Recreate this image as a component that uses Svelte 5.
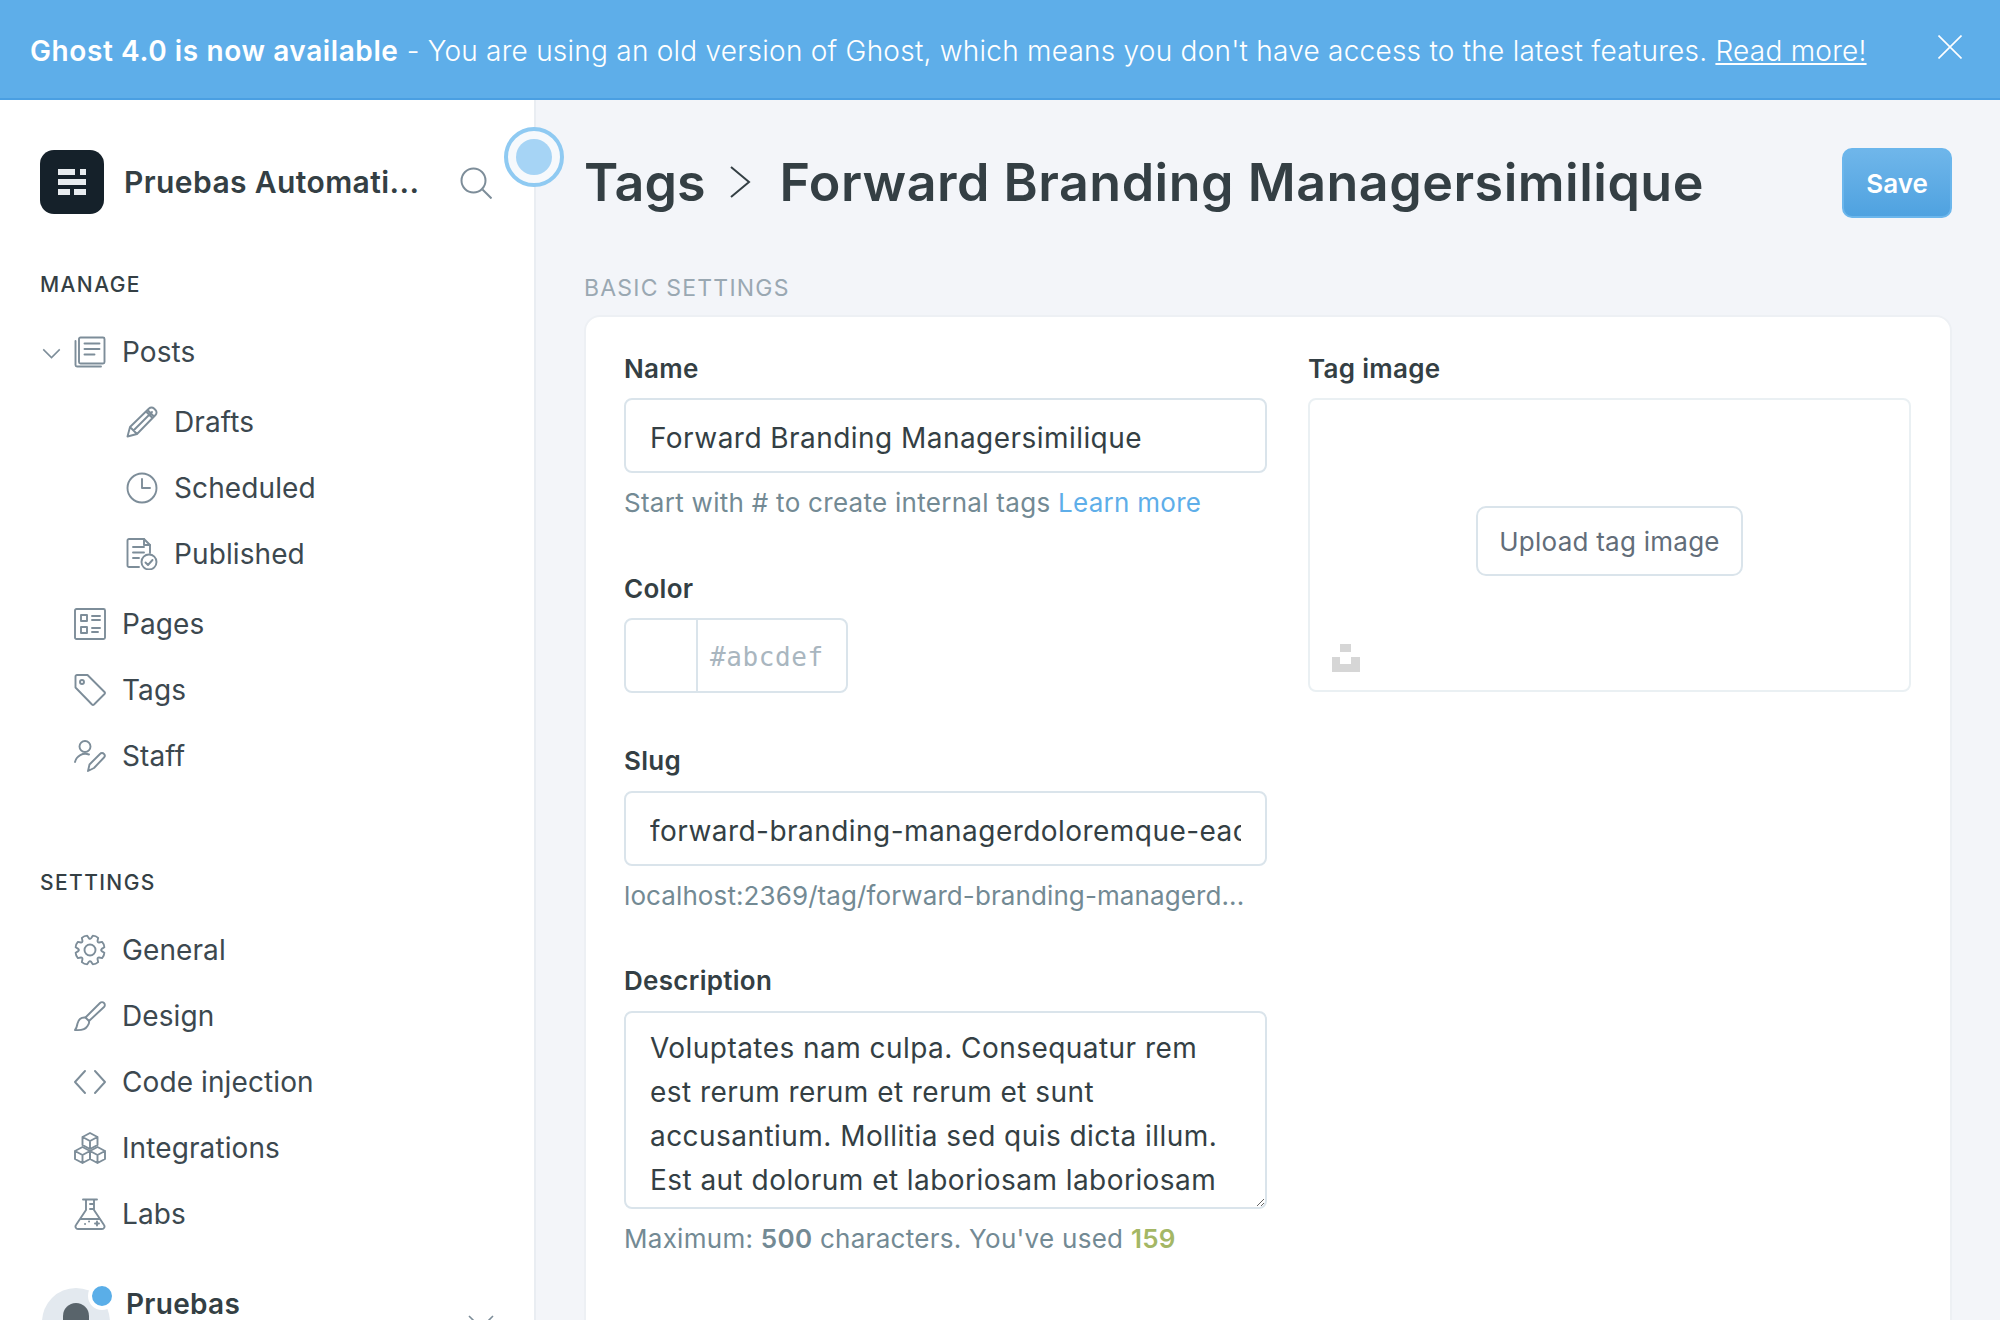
<script>
	const manage = [
		{ label: 'Posts', icon: 'posts', caret: true },
		{ label: 'Drafts', icon: 'drafts', sub: true },
		{ label: 'Scheduled', icon: 'clock', sub: true },
		{ label: 'Published', icon: 'published', sub: true },
		{ label: 'Pages', icon: 'pages', gap: true },
		{ label: 'Tags', icon: 'tag' },
		{ label: 'Staff', icon: 'staff' }
	];
	const settings = [
		{ label: 'General', icon: 'gear' },
		{ label: 'Design', icon: 'brush' },
		{ label: 'Code injection', icon: 'code' },
		{ label: 'Integrations', icon: 'cubes' },
		{ label: 'Labs', icon: 'flask' }
	];
	const description =
		'Voluptates nam culpa. Consequatur rem est rerum rerum et rerum et sunt accusantium. Mollitia sed quis dicta illum. Est aut dolorum et laboriosam laboriosam';

	// eight rounded teeth round the centre of the 32 box
	function gearPath() {
		const pt = (r, a) => `${(16 + r * Math.cos(a)).toFixed(2)} ${(16 + r * Math.sin(a)).toFixed(2)}`;
		let d = '';
		for (let i = 0; i < 8; i++) {
			const a = (i * Math.PI) / 4 - Math.PI / 8;
			d += `${i ? 'Q' : 'M'}${i ? pt(10.5, a - 0.39) + ' ' : ''}${pt(11.8, a - 0.3)}`;
			d += `L${pt(14.6, a - 0.2)}Q${pt(15.4, a)} ${pt(14.6, a + 0.2)}L${pt(11.8, a + 0.3)}`;
		}
		return d + `Q${pt(10.5, -Math.PI / 8 - 0.39)} ${pt(11.8, -Math.PI / 8 - 0.3)}Z`;
	}
	const gear = gearPath();
</script>

{#snippet icon(name)}
	<svg class="icon" viewBox="0 0 32 32" fill="none" stroke="currentColor" stroke-width="1.9" stroke-linecap="round" stroke-linejoin="round">
		{#if name === 'posts'}
			<rect x="5" y="1.500" width="25.500" height="26" rx="1.500" />
			<path d="M1.500 5v24a1.500 1.500 0 0 0 1.500 1.500h24M10.500 7.500h15M10.500 13h15M10.500 18.500h10" />
		{:else if name === 'drafts'}
			<path d="M1.500 30.500L4 21 23 2.500a3.500 3.500 0 0 1 5 0l1.500 1.500a3.500 3.500 0 0 1 0 5L11 28zM4 21l7 7M7.500 24.500L26 6M20 5.500l6.500 6.500M21.500 4l6.500 6.500" />
		{:else if name === 'clock'}
			<circle cx="16" cy="16" r="14.500" />
			<path d="M16 7v9h8" />
		{:else if name === 'published'}
			<path d="M13 29H3a1.500 1.500 0 0 1-1.500-1.500v-25A1.500 1.500 0 0 1 3 1h15l6 6v8M7 9h11M7 14.500h11M7 20h6" />
			<path d="M18 1v6h6" />
			<circle cx="23" cy="24" r="7.500" />
			<path d="M19.500 24.500l2.500 2.500 4.500-5" />
		{:else if name === 'pages'}
			<rect x="1" y="1" width="30" height="30" rx="1.500" />
			<rect x="7" y="7" width="6" height="6" />
			<rect x="7" y="19" width="6" height="6" />
			<path d="M18 8h8M18 12h8M18 20h8M18 24h6" />
		{:else if name === 'tag'}
			<path d="M1.500 2.500A1.500 1.500 0 0 1 3 1h10.500l17 17a1.500 1.500 0 0 1 0 2L20 30.500a1.500 1.500 0 0 1-2 0L1.500 13.500z" />
			<circle cx="8" cy="8" r="2" />
		{:else if name === 'staff'}
			<circle cx="11" cy="6.500" r="5.500" />
			<path d="M1 22a10.500 10.500 0 0 1 14-7.500" />
			<path d="M14 31l1.500-6.500L26 14a2.500 2.500 0 0 1 4 0 2.500 2.500 0 0 1 0 3.500L20 28z" />
		{:else if name === 'gear'}
			<path d={gear} />
			<circle cx="16" cy="16" r="5.500" />
		{:else if name === 'brush'}
			<path d="M15 21l-3.500-3.500L26 3a2.800 2.800 0 0 1 4 0 2.800 2.800 0 0 1 0 4z" />
			<path d="M11.500 17.500c-4.500-.5-7 2-8 6-.5 2.500-1 5-2.500 6.500 5.500.5 10.500-.5 12.500-4 1.500-2 2-3.500 1.500-5" />
		{:else if name === 'code'}
			<path d="M11 5L1 16l10 11M21 5l10 11-10 11" />
		{:else if name === 'cubes'}
			<path d="M16 1l7.500 4v8L16 17l-7.500-4V5zM8.500 5l7.500 4 7.500-4M16 9v8" />
			<path d="M8.500 15L16 19v8l-7.500 4L1 27v-8zM1 19l7.500 4 7.500-4M8.500 23v8" />
			<path d="M23.500 15L31 19v8l-7.500 4L16 27v-8zM16 19l7.500 4 7.500-4M23.500 23v8" />
		{:else if name === 'flask'}
			<path d="M9 1.500h14M12 1.500V12L2 27a2.500 2.500 0 0 0 2 4h24a2.500 2.500 0 0 0 2-4L20 12V1.500M16 6h4M16 11h4M6 21h20M11 26h.1M15 23.500h.1M21 25.500h4M23 23.500v4" />
		{/if}
	</svg>
{/snippet}

{#snippet navRow(item)}
	<div class="nav-row" class:sub={item.sub} class:gap={item.gap} class:open={item.caret}>
		{#if item.caret}
			<svg class="caret" viewBox="0 0 20 12" fill="none" stroke="currentColor" stroke-width="1.6"><path d="M1 1.500l9 9 9-9" /></svg>
		{/if}
		{@render icon(item.icon)}
		<span>{item.label}</span>
	</div>
{/snippet}

<div class="page">
	<div class="banner">
		<p><strong>Ghost 4.0 is now available</strong> - You are using an old version of Ghost, which means you don't have access to the latest features. <a href="#top">Read more!</a></p>
		<svg class="close" viewBox="0 0 24 24" fill="none" stroke="#fff" stroke-width="1.6"><path d="M0.500 0.500l23 23M23.500 0.500l-23 23" /></svg>
	</div>

	<div class="layout">
		<aside class="sidebar">
			<div class="brand">
				<div class="logo">
					<i style="width:17px"></i><i style="width:6px"></i>
					<i style="width:28px"></i>
					<i style="width:12px"></i><i style="width:12px"></i>
				</div>
				<span class="site">Pruebas Automati...</span>
				<svg class="search" viewBox="0 0 32 32" fill="none" stroke="currentColor" stroke-width="2"><circle cx="13.500" cy="13.500" r="12" /><path d="M22.500 22.500l9 9" /></svg>
			</div>

			<h4>MANAGE</h4>
			{#each manage as item}
				{@render navRow(item)}
			{/each}

			<h4 class="second">SETTINGS</h4>
			{#each settings as item}
				{@render navRow(item)}
			{/each}

			<div class="user">
				<div class="avatar"><i></i><b></b></div>
				<span>Pruebas</span>
				<svg class="user-caret" viewBox="0 0 26 14" fill="none" stroke="currentColor" stroke-width="1.6"><path d="M1 1l12 12L25 1" /></svg>
			</div>

			<div class="pulse"><i></i></div>
		</aside>

		<main class="content">
			<header class="head">
				<h1>
					<span class="root">Tags</span>
					<svg class="crumb" viewBox="0 0 22 34" fill="none" stroke="currentColor" stroke-width="2"><path d="M2 2l18 15L2 32" /></svg>
					<span>Forward Branding Managersimilique</span>
				</h1>
				<button class="save">Save</button>
			</header>

			<div class="section">BASIC SETTINGS</div>

			<section class="card">
				<div class="col">
					<label for="name">Name</label>
					<input id="name" value="Forward Branding Managersimilique" />
					<p class="help">Start with # to create internal tags <a href="#top">Learn more</a></p>

					<label for="color" class="next">Color</label>
					<div class="color">
						<div class="swatch"></div>
						<span id="color">#abcdef</span>
					</div>

					<label for="slug" class="next slug-label">Slug</label>
					<input id="slug" value="forward-branding-managerdoloremque-eaque" />
					<p class="help url">localhost:2369/tag/forward-branding-managerd...</p>

					<label for="desc" class="next desc-label">Description</label>
					<textarea id="desc" value={description}></textarea>
					<p class="help">Maximum: <b>500</b> characters. You've used <b class="used">159</b></p>
				</div>

				<div class="col side">
					<span class="label">Tag image</span>
					<div class="upload">
						<button>Upload tag image</button>
						<svg class="unsplash" viewBox="0 0 28 28" fill="#d6d6d6"><path d="M8 0h11v8H8zM0 13h8v7h11v-7h9v15H0z" /></svg>
					</div>
				</div>
			</section>
		</main>
	</div>
</div>

<style>
	:global(body) {
		margin: 0;
		background: #f3f5f9;
	}

	.page {
		height: 1320px;
		overflow: hidden;
		display: flex;
		flex-direction: column;
		font-family: Inter, 'Noto Sans', sans-serif;
		color: #3c484f;
	}

	.banner {
		height: 98px;
		flex: none;
		display: flex;
		align-items: center;
		justify-content: space-between;
		padding: 0 38px 0 30px;
		background: #5eaee9;
		border-bottom: 2px solid #4a9fe2;
		color: #fff;
		font-size: 28px;
		letter-spacing: 0.24px;
	}

	.banner p {
		margin: 4px 0 0;
		font-weight: 300;
	}

	.banner strong {
		font-weight: 600;
		letter-spacing: 0.6px;
	}

	.banner a {
		color: #fff;
	}

	.close {
		width: 24px;
		height: 24px;
		margin-bottom: 4px;
	}

	.layout {
		flex: 1;
		display: flex;
		min-height: 0;
	}

	.sidebar {
		position: relative;
		width: 536px;
		flex: none;
		box-sizing: border-box;
		padding: 50px 40px 0;
		background: #fff;
		border-right: 2px solid #e9edf2;
	}

	.brand {
		display: flex;
		align-items: center;
		height: 64px;
		margin-bottom: 59px;
	}

	.logo {
		width: 64px;
		height: 64px;
		box-sizing: border-box;
		padding: 19px 18px;
		flex: none;
		display: flex;
		flex-wrap: wrap;
		justify-content: space-between;
		align-content: space-between;
		background: #15212a;
		border-radius: 14px;
	}

	.logo i {
		display: block;
		height: 6px;
		background: #e8ecef;
	}

	.site {
		margin-left: 20px;
		font-size: 30px;
		font-weight: 600;
		letter-spacing: 0.4px;
		color: #343f44;
		white-space: nowrap;
	}

	.search {
		width: 32px;
		height: 32px;
		margin-left: auto;
		margin-right: 2px;
		margin-top: 2px;
		color: #7d8d99;
	}

	h4 {
		margin: 0 0 22px;
		font-size: 21px;
		line-height: 24px;
		font-weight: 500;
		letter-spacing: 1.4px;
		color: #343f44;
	}

	h4.second {
		margin-top: 82px;
	}

	.nav-row {
		position: relative;
		display: flex;
		align-items: center;
		height: 66px;
		padding-left: 34px;
		font-size: 28px;
		letter-spacing: 0.1px;
		font-weight: 400;
		color: #3c484f;
	}

	.nav-row.sub {
		padding-left: 86px;
	}

	.nav-row.gap {
		margin-top: 4px;
	}

	.nav-row.open {
		margin-bottom: 4px;
	}

	.icon {
		width: 32px;
		height: 32px;
		flex: none;
		margin-right: 16px;
		color: #7d8d99;
	}

	.caret {
		position: absolute;
		left: 2px;
		top: 29px;
		width: 19px;
		height: 11px;
		color: #7d8d99;
	}

	.user {
		position: relative;
		display: flex;
		align-items: flex-start;
		margin-top: 41px;
		font-size: 28px;
		line-height: 30px;
		font-weight: 600;
		letter-spacing: 0.3px;
		color: #343f44;
	}

	.user span {
		margin-left: 16px;
		margin-top: 1px;
	}

	.avatar {
		position: relative;
		width: 68px;
		height: 68px;
		margin-left: 2px;
		border-radius: 50%;
		background: #e3e9ef;
	}

	.avatar i {
		position: absolute;
		left: 21px;
		top: 15px;
		width: 26px;
		height: 32px;
		border-radius: 13px;
		background: #59646b;
	}

	.avatar b {
		position: absolute;
		left: 46px;
		top: -6px;
		width: 20px;
		height: 20px;
		border: 4px solid #fff;
		border-radius: 50%;
		background: #5aaee8;
	}

	.user-caret {
		position: absolute;
		left: 428px;
		top: 27px;
		width: 26px;
		height: 14px;
		color: #7d8d99;
	}

	.pulse {
		position: absolute;
		right: -30px;
		top: 27px;
		width: 60px;
		height: 60px;
		box-sizing: border-box;
		display: flex;
		align-items: center;
		justify-content: center;
		border: 4px solid #8fcaf2;
		border-radius: 50%;
		background: #f6f9fc;
		z-index: 2;
	}

	.pulse i {
		display: block;
		width: 36px;
		height: 36px;
		border-radius: 50%;
		background: #a6d4f5;
	}

	.content {
		flex: 1;
		min-width: 0;
		padding: 48px 48px 0 48px;
	}

	.head {
		display: flex;
		align-items: center;
		justify-content: space-between;
		height: 70px;
	}

	h1 {
		display: flex;
		align-items: center;
		margin: 0 0 2px;
		font-size: 52px;
		font-weight: 600;
		letter-spacing: 0.5px;
		color: #343f44;
	}

	h1 .root {
		letter-spacing: 0;
	}

	.crumb {
		width: 22px;
		height: 34px;
		margin: 0 28px 0 24px;
		color: #343f44;
	}

	.save {
		width: 110px;
		height: 70px;
		border: 2px solid #6bb6ec;
		border-radius: 10px;
		background: linear-gradient(#6fb6ea, #4fa2e0);
		color: #fff;
		font: 600 26px Inter, sans-serif;
	}

	.section {
		margin-top: 56px;
		margin-bottom: 13px;
		font-size: 23px;
		line-height: 28px;
		letter-spacing: 1.2px;
		color: #9aa8b2;
	}

	.card {
		display: flex;
		gap: 41px;
		padding: 37px 38px 200px;
		background: #fff;
		border: 2px solid #edf0f4;
		border-radius: 16px;
	}

	.col {
		display: flex;
		flex-direction: column;
		align-items: flex-start;
		width: 643px;
		flex: none;
	}

	.col.side {
		width: 603px;
	}

	label,
	.label {
		display: block;
		font-size: 26px;
		line-height: 30px;
		font-weight: 600;
		letter-spacing: 0.3px;
		color: #343f44;
		margin-bottom: 14px;
	}

	label.next {
		margin-top: 56px;
	}

	label.slug-label {
		margin-top: 53px;
		margin-bottom: 15px;
	}

	label.desc-label {
		margin-top: 55px;
		margin-bottom: 15px;
	}

	input,
	textarea {
		display: block;
		width: 100%;
		box-sizing: border-box;
		border: 2px solid #dae4eb;
		border-radius: 8px;
		background: #fff;
		font-family: Inter, sans-serif;
		font-size: 28px;
		letter-spacing: 0.45px;
		color: #343f44;
		outline: none;
	}

	input {
		height: 75px;
		padding: 4px 24px 0;
	}

	textarea {
		height: 198px;
		padding: 13px 24px;
		line-height: 44px;
		overflow: hidden;
		resize: vertical;
	}

	.help {
		margin: 15px 0 0;
		font-size: 26px;
		line-height: 30px;
		letter-spacing: 0.28px;
		color: #738a94;
		white-space: nowrap;
	}

	.help.url {
		letter-spacing: 0.1px;
	}

	.help a {
		color: #5eaee9;
		text-decoration: none;
	}

	.help b {
		font-weight: 600;
	}

	.help .used {
		color: #a4b765;
	}

	.color {
		display: flex;
		width: 224px;
		height: 75px;
		box-sizing: border-box;
		border: 2px solid #dae4eb;
		border-radius: 8px;
	}

	.swatch {
		width: 70px;
		border-right: 2px solid #dae4eb;
	}

	.color span {
		display: flex;
		align-items: center;
		padding: 2px 0 0 12px;
		font-family: 'DejaVu Sans Mono', monospace;
		font-size: 26px;
		letter-spacing: 0.6px;
		color: #a9b6bf;
	}

	.upload {
		position: relative;
		display: flex;
		align-items: center;
		justify-content: center;
		width: 100%;
		height: 294px;
		box-sizing: border-box;
		border: 2px solid #eaf0f3;
		border-radius: 8px;
	}

	.upload button {
		width: 267px;
		height: 70px;
		margin-bottom: 8px;
		border: 2px solid #dae4eb;
		border-radius: 10px;
		background: #fff;
		color: #626d79;
		font: 400 26px Inter, sans-serif;
		letter-spacing: 0.25px;
	}

	.unsplash {
		position: absolute;
		left: 22px;
		bottom: 18px;
		width: 28px;
		height: 28px;
	}
</style>
